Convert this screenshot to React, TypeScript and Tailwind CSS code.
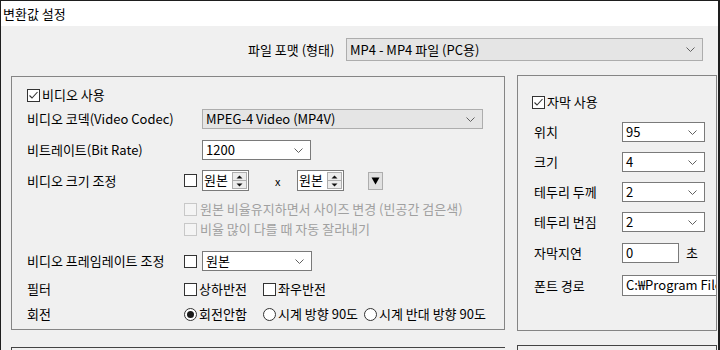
import React from "react";

const Chevron = () => (
  <svg width="9" height="5" viewBox="0 0 9 5" className="shrink-0">
    <path d="M0.5 0.5 L4.5 4.5 L8.5 0.5" fill="none" stroke="#606060" strokeWidth="1" />
  </svg>
);

function Combo({ className, text, gray = false }: { className: string; text: string; gray?: boolean }) {
  return (
    <div
      className={`flex items-center justify-between shrink-0 pl-[3px] pr-[7px] border ${
        gray ? "bg-[#e5e5e5] border-[#adadad]" : "bg-white border-[#7a7a7a]"
      } ${className}`}
    >
      <span className="whitespace-nowrap leading-[16px]">{text}</span>
      <Chevron />
    </div>
  );
}

function Check({ checked = false, disabled = false }: { checked?: boolean; disabled?: boolean }) {
  return (
    <span
      className={`w-[13px] h-[13px] shrink-0 border flex items-center justify-center ${
        disabled ? "border-[#c8c8c8] bg-[#f4f4f4]" : "border-[#333333] bg-white"
      }`}
    >
      {checked && (
        <svg width="11" height="11" viewBox="0 0 11 11">
          <path d="M1.5 5.5 L4 8 L9.5 2" fill="none" stroke="#333333" strokeWidth="1.1" />
        </svg>
      )}
    </span>
  );
}

function Radio({ on = false }: { on?: boolean }) {
  return (
    <span className="w-[13px] h-[13px] shrink-0 rounded-full border border-[#333333] bg-white flex items-center justify-center">
      {on && <span className="w-[7px] h-[7px] rounded-full bg-[#1a1a1a]" />}
    </span>
  );
}

function Spin() {
  return (
    <div className="flex h-[21px] w-[47px] shrink-0 border border-[#7a7a7a] bg-white">
      <span className="flex-1 pl-[1px] leading-[18px] whitespace-nowrap overflow-hidden">원본</span>
      <div className="flex flex-col w-[15px] shrink-0 my-[1px] mr-[1px]">
        <span className="flex-1 border border-[#adadad] bg-[#ececec] flex items-center justify-center">
          <svg width="7" height="4" viewBox="0 0 7 4">
            <path d="M0.5 3.5 L3.5 0.5 L6.5 3.5 Z" fill="#111" />
          </svg>
        </span>
        <span className="flex-1 border border-t-0 border-[#adadad] bg-[#ececec] flex items-center justify-center">
          <svg width="7" height="4" viewBox="0 0 7 4">
            <path d="M0.5 0.5 L3.5 3.5 L6.5 0.5 Z" fill="#111" />
          </svg>
        </span>
      </div>
    </div>
  );
}

export default function App() {
  return (
    <div className="w-[720px] h-[350px] overflow-hidden bg-[#f0f0f0] border-t border-l border-r-2 border-[#1e1e1e] text-[13px] text-black font-['Noto_Sans_CJK_KR','Noto_Sans',sans-serif] leading-[16px] flex flex-col">
      {/* title bar */}
      <div className="h-[25px] bg-white flex items-center pl-[2px] shrink-0">
        <span>변환값 설정</span>
      </div>

      {/* format row */}
      <div className="flex items-center mt-[12px] h-[23px] pl-[247px] shrink-0">
        <span className="w-[98px] shrink-0 whitespace-nowrap">파일 포맷 (형태)</span>
        <Combo className="w-[357px] h-[23px]" text="MP4 - MP4 파일 (PC용)" gray />
      </div>

      {/* panels */}
      <div className="flex mt-[14px] pl-[10px] gap-[12px] items-start">
        {/* left column */}
        <div className="flex flex-col w-[494px] pt-[1px] shrink-0">
          <div className="h-[254px] border border-[#858585] flex flex-col pl-[15px]">
            <div className="flex items-center h-[18px] mt-[9px] gap-[2px]">
              <Check checked />
              <span>비디오 사용</span>
            </div>
            <div className="flex items-center h-[20px] mt-[5px]">
              <span className="w-[175px] shrink-0 whitespace-nowrap">비디오 코덱(Video Codec)</span>
              <Combo className="w-[281px] h-[20px]" text="MPEG-4 Video (MP4V)" gray />
            </div>
            <div className="flex items-center h-[20px] mt-[11px]">
              <span className="w-[175px] shrink-0 whitespace-nowrap">비트레이트(Bit Rate)</span>
              <Combo className="w-[109px] h-[20px]" text="1200" />
            </div>
            <div className="flex items-center h-[21px] mt-[10px]">
              <span className="w-[157px] shrink-0 whitespace-nowrap">비디오 크기 조정</span>
              <Check />
              <span className="w-[5px] shrink-0" />
              <Spin />
              <span className="ml-[26px] w-[6px] text-[11px]">x</span>
              <span className="w-[16px] shrink-0" />
              <Spin />
              <span className="ml-[24px] w-[15px] h-[18px] shrink-0 border border-[#adadad] bg-[#e1e1e1] flex items-center justify-center">
                <svg width="9" height="8" viewBox="0 0 9 8">
                  <path d="M0.5 0.5 L8.5 0.5 L4.5 7.5 Z" fill="#000" />
                </svg>
              </span>
            </div>
            <div className="flex items-center h-[18px] mt-[9px] pl-[157px] gap-[3px] text-[#a0a0a0]">
              <Check disabled />
              <span className="whitespace-nowrap">원본 비율유지하면서 사이즈 변경 (빈공간 검은색)</span>
            </div>
            <div className="flex items-center h-[18px] mt-[2px] pl-[157px] gap-[3px] text-[#a0a0a0]">
              <Check disabled />
              <span className="whitespace-nowrap">비율 많이 다를 때 자동 잘라내기</span>
            </div>
            <div className="flex items-center h-[20px] mt-[13px]">
              <span className="w-[157px] shrink-0 whitespace-nowrap">비디오 프레임레이트 조정</span>
              <Check />
              <span className="w-[5px] shrink-0" />
              <Combo className="w-[110px] h-[20px]" text="원본" />
            </div>
            <div className="flex items-center h-[18px] mt-[9px]">
              <span className="w-[157px] shrink-0">필터</span>
              <div className="flex items-center gap-[2px] w-[79px] shrink-0">
                <Check />
                <span>상하반전</span>
              </div>
              <div className="flex items-center gap-[2px]">
                <Check />
                <span>좌우반전</span>
              </div>
            </div>
            <div className="flex items-center h-[18px] mt-[7px]">
              <span className="w-[157px] shrink-0">회전</span>
              <div className="flex items-center gap-[2px] w-[79px] shrink-0">
                <Radio on />
                <span className="whitespace-nowrap">회전안함</span>
              </div>
              <div className="flex items-center gap-[2px] w-[101px] shrink-0">
                <Radio />
                <span className="whitespace-nowrap">시계 방향 90도</span>
              </div>
              <div className="flex items-center gap-[2px]">
                <Radio />
                <span className="whitespace-nowrap">시계 반대 방향 90도</span>
              </div>
            </div>
          </div>
          <div className="mt-[17px] h-[10px] border-t border-l border-[#444444]" />
        </div>

        {/* right column */}
        <div className="flex flex-col w-[200px] shrink-0">
          <div className="h-[256px] border border-[#858585] flex flex-col pl-[16px] overflow-hidden">
            <div className="flex items-center h-[18px] mt-[17px] gap-[2px] -ml-[2px]">
              <Check checked />
              <span>자막 사용</span>
            </div>
            <div className="flex items-center h-[20px] mt-[11px]">
              <span className="w-[88px] shrink-0">위치</span>
              <Combo className="w-[83px] h-[20px]" text="95" />
            </div>
            <div className="flex items-center h-[20px] mt-[10px]">
              <span className="w-[88px] shrink-0">크기</span>
              <Combo className="w-[83px] h-[20px]" text="4" />
            </div>
            <div className="flex items-center h-[20px] mt-[10px]">
              <span className="w-[88px] shrink-0 whitespace-nowrap">테두리 두께</span>
              <Combo className="w-[83px] h-[20px]" text="2" />
            </div>
            <div className="flex items-center h-[20px] mt-[10px]">
              <span className="w-[88px] shrink-0 whitespace-nowrap">테두리 번짐</span>
              <Combo className="w-[83px] h-[20px]" text="2" />
            </div>
            <div className="flex items-center h-[20px] mt-[11px]">
              <span className="w-[88px] shrink-0">자막지연</span>
              <div className="w-[57px] h-[20px] shrink-0 border border-[#7a7a7a] bg-white pl-[3px] leading-[17px]">0</div>
              <span className="ml-[7px]">초</span>
            </div>
            <div className="flex items-center h-[21px] mt-[12px]">
              <span className="w-[88px] shrink-0 whitespace-nowrap">폰트 경로</span>
              <div className="w-[200px] shrink-0 h-[21px] border border-[#7a7a7a] bg-white pl-[3px] leading-[18px] whitespace-nowrap">
                C:₩Program Files₩Fonts
              </div>
            </div>
          </div>
          <div className="mt-[14px] h-[10px] border-t border-l border-r border-[#444444]" />
        </div>
      </div>
    </div>
  );
}
